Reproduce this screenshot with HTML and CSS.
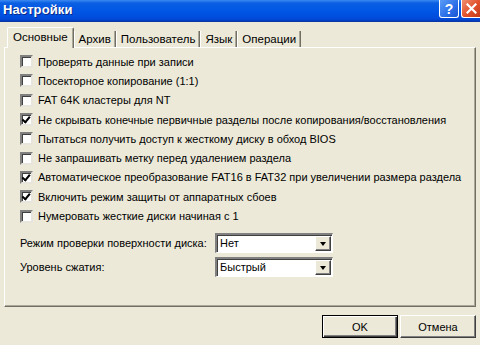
FILE: index.html
```html
<!DOCTYPE html>
<html lang="ru">
<head>
    <meta charset="UTF-8">
    <title>Настройки</title>
    <link rel="stylesheet" href="styles.css">
</head>
<body>
    <div class="window">
        <div class="titlebar">
            <span class="title">Настройки</span>
            <div class="title-buttons">
                <span class="tbtn help">?</span>
                <span class="tbtn close">
                    <svg width="11" height="11" viewBox="0 0 11 11"><path d="M1.5 1.5 L9.5 9.5 M9.5 1.5 L1.5 9.5" stroke="#fff" stroke-width="2.2" stroke-linecap="square"/></svg>
                </span>
            </div>
        </div>

        <div class="content">
            <div class="tabs">
                <div class="tab active">Основные</div>
                <div class="tab">Архив</div>
                <div class="tab">Пользователь</div>
                <div class="tab">Язык</div>
                <div class="tab">Операции</div>
            </div>

            <div class="panel">
                <div class="checks">
                    <label class="check"><span class="box"></span>Проверять данные при записи</label>
                    <label class="check"><span class="box"></span>Посекторное копирование (1:1)</label>
                    <label class="check"><span class="box"></span>FAT 64K кластеры для NT</label>
                    <label class="check"><span class="box checked"></span>Не скрывать конечные первичные разделы после копирования/восстановления</label>
                    <label class="check"><span class="box"></span>Пытаться получить доступ к жесткому диску в обход BIOS</label>
                    <label class="check"><span class="box"></span>Не запрашивать метку перед удалением раздела</label>
                    <label class="check"><span class="box checked"></span>Автоматическое преобразование FAT16 в FAT32 при увеличении размера раздела</label>
                    <label class="check"><span class="box checked"></span>Включить режим защиты от аппаратных сбоев</label>
                    <label class="check"><span class="box"></span>Нумеровать жесткие диски начиная с 1</label>
                </div>

                <div class="fields">
                    <span class="field-label">Режим проверки поверхности диска:</span>
                    <div class="combo"><span class="combo-value">Нет</span><span class="combo-arrow"></span></div>
                    <span class="field-label">Уровень сжатия:</span>
                    <div class="combo"><span class="combo-value">Быстрый</span><span class="combo-arrow"></span></div>
                </div>
            </div>

            <div class="footer">
                <button class="btn default">OK</button>
                <button class="btn">Отмена</button>
            </div>
        </div>
    </div>
</body>
</html>
```

FILE: styles.css
```css
body {
    margin: 0;
    background-color: #ece9d8;
    font-family: 'Liberation Sans', Arial, sans-serif;
    font-size: 11px;
    color: #000;
}
.window {
    width: 480px;
    height: 345px;
    overflow: hidden;
    background-color: #ece9d8;
}
.titlebar {
    height: 21px;
    display: flex;
    align-items: flex-start;
    justify-content: space-between;
    background: linear-gradient(#3b8af2 0, #0b5fe2 3px, #0055e5 12px, #0049d8 19px, #003cb8 21px);
    border-bottom: 1px solid #0a37a8;
}
.title {
    color: #fff;
    font-weight: bold;
    font-size: 13px;
    padding: 2px 0 0 3px;
    text-shadow: 1px 1px 0 #0a2a86;
    letter-spacing: 0.1px;
}
.title-buttons {
    display: flex;
    gap: 2px;
}
.tbtn {
    width: 18px;
    height: 17px;
    display: flex;
    align-items: center;
    justify-content: center;
    border: 1px solid #fff;
    border-top: none;
    border-radius: 0 0 3px 3px;
    color: #fff;
    font-weight: bold;
    font-size: 14px;
}
.help {
    background: linear-gradient(135deg, #5c9cf8, #2a6ee8 60%, #1a55d0);
}
.close {
    background: linear-gradient(135deg, #f09070, #e0502a 55%, #c23c1a);
    border-right: none;
    border-radius: 0 0 0 3px;
}
.content {
    padding: 5px 4px 0 4px;
}
.tabs {
    display: flex;
    align-items: flex-end;
    height: 20px;
    padding-left: 3px;
    font-size: 11.5px;
}
.tab {
    height: 16px;
    line-height: 16px;
    padding: 0 4px;
    border-left: 1px solid #fff;
    border-right: 1px solid #716f64;
    box-shadow: inset -1px 0 0 #aca899;
    white-space: nowrap;
}
.tab.active {
    height: 20px;
    line-height: 18px;
    padding: 0 5px;
    border-top: 1px solid #fff;
    border-radius: 2px 2px 0 0;
    margin-bottom: -1px;
    position: relative;
    background-color: #ece9d8;
}
.panel {
    height: 254px;
    padding: 4px 0 0 15px;
    border-top: 1px solid #fff;
    border-left: 1px solid #fff;
    border-right: 1px solid #716f64;
    border-bottom: 1px solid #716f64;
    box-shadow: inset -1px -1px 0 #aca899;
}
.check {
    display: flex;
    align-items: center;
    height: 19.3px;
    gap: 5px;
    white-space: nowrap;
}
.box {
    flex: none;
    width: 9px;
    height: 9px;
    background-color: #fff;
    border-top: 2px solid #808080;
    border-left: 2px solid #808080;
    border-right: 2px solid #e8e6dc;
    border-bottom: 2px solid #e8e6dc;
    box-shadow: inset 1px 1px 0 #404040;
    position: relative;
}
.box.checked::after {
    content: '';
    position: absolute;
    left: 1px;
    top: 0;
    width: 3px;
    height: 6px;
    border-right: 2px solid #000;
    border-bottom: 2px solid #000;
    transform: rotate(40deg);
    transform-origin: 60% 60%;
}
.fields {
    display: grid;
    grid-template-columns: 195px 118px;
    row-gap: 4px;
    align-items: center;
    margin-top: 7px;
}
.field-label {
    white-space: nowrap;
}
.combo {
    height: 17px;
    display: flex;
    align-items: center;
    background-color: #fff;
    border-top: 2px solid #808080;
    border-left: 2px solid #808080;
    border-right: 1px solid #fff;
    border-bottom: 1px solid #fff;
    box-shadow: inset 1px 1px 0 #404040;
}
.combo-value {
    flex: 1;
    padding-left: 3px;
}
.combo-arrow {
    width: 14px;
    height: 13px;
    margin-right: 1px;
    background-color: #ece9d8;
    border-top: 1px solid #fff;
    border-left: 1px solid #fff;
    border-right: 1px solid #404040;
    border-bottom: 1px solid #404040;
    box-shadow: inset -1px -1px 0 #808080;
    position: relative;
}
.combo-arrow::after {
    content: '';
    position: absolute;
    left: 4px;
    top: 5px;
    border-left: 3.5px solid transparent;
    border-right: 3.5px solid transparent;
    border-top: 4px solid #000;
}
.footer {
    display: flex;
    justify-content: flex-end;
    gap: 2px;
    padding: 8px 0 0 0;
}
.btn {
    width: 76px;
    height: 23px;
    font-family: 'Liberation Sans', Arial, sans-serif;
    font-size: 11px;
    background-color: #ece9d8;
    border-top: 1px solid #fff;
    border-left: 1px solid #fff;
    border-right: 1px solid #404040;
    border-bottom: 1px solid #404040;
    box-shadow: inset -1px -1px 0 #808080;
    padding: 0;
    color: #000;
}
.btn.default {
    border: 1px solid #000;
    box-shadow: inset 1px 1px 0 #fff, inset -1px -1px 0 #404040, inset -2px -2px 0 #808080;
}
```
